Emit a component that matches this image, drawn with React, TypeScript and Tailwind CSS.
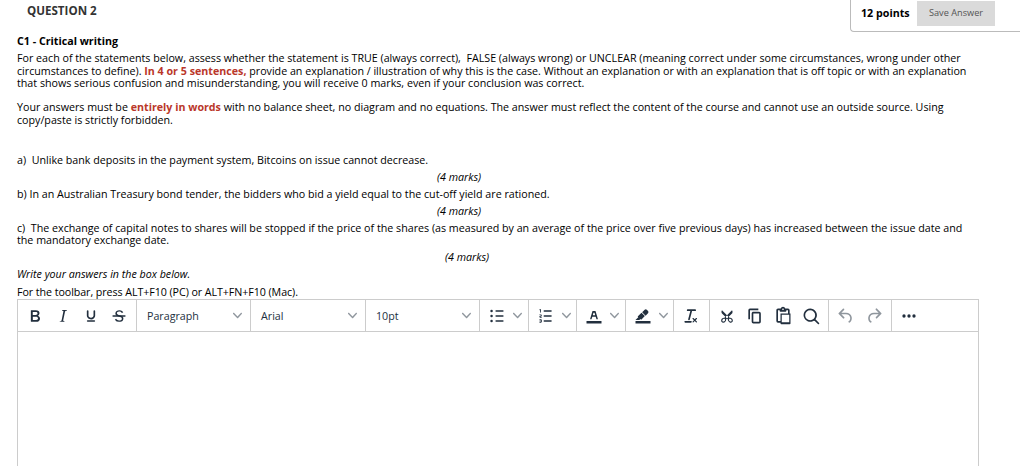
import type { ReactNode } from 'react'

function Icon({ children, muted = false }: { children: ReactNode; muted?: boolean }) {
  return (
    <span className="flex w-7 shrink-0 items-center justify-center">
      <svg
        viewBox="0 0 24 24"
        className={muted ? 'h-5 w-5 fill-[#222f3e] opacity-50' : 'h-5 w-5 fill-[#222f3e]'}
      >
        {children}
      </svg>
    </span>
  )
}

function Chevron() {
  return (
    <svg viewBox="0 0 10 10" className="h-[9px] w-[9px] shrink-0 fill-[#222f3e] opacity-50">
      <path d="M8.7 2.2c.3-.3.8-.3 1 0 .4.4.4.9 0 1.2L5.7 7.8c-.3.3-.9.3-1.2 0L.2 3.4a.8.8 0 010-1.2c.3-.3.8-.3 1.1 0L5 6l3.7-3.8z" />
    </svg>
  )
}

function Select({ label, className }: { label: string; className: string }) {
  return (
    <div
      className={`flex shrink-0 items-center justify-between border-r border-[#ccc] pl-[10px] pr-2 text-[#222f3e] ${className}`}
    >
      <span className="pt-[2px]">{label}</span>
      <Chevron />
    </div>
  )
}

function SplitButton({ children, className }: { children: ReactNode; className: string }) {
  return (
    <div className={`flex shrink-0 items-center border-r border-[#ccc] pl-[3px] ${className}`}>
      {children}
      <span className="ml-[2px] flex">
        <Chevron />
      </span>
    </div>
  )
}

function Toolbar() {
  return (
    <div className="flex h-8 border-b border-[#ccc]">
      <div className="flex w-[119px] shrink-0 items-center border-r border-[#ccc] pl-[3px]">
        <Icon>
          <path fillRule="evenodd" d="M7.8 19c-.3 0-.5 0-.6-.2l-.2-.5V5.7c0-.2 0-.4.2-.5l.6-.2h5c1.5 0 2.7.3 3.5 1 .7.6 1.1 1.4 1.1 2.5a3 3 0 01-.6 1.9c-.4.6-1 1-1.6 1.2.4.1.9.3 1.3.6s.8.7 1 1.2c.4.4.5 1 .5 1.6 0 1.3-.4 2.3-1.3 3-.8.7-2.1 1-3.8 1H7.8zm5-8.3c.6 0 1.2-.1 1.6-.5.4-.3.6-.7.6-1.3 0-1.1-.8-1.7-2.3-1.7H9.3v3.5h3.4zm.5 6c.7 0 1.3-.1 1.7-.4.4-.4.6-.9.6-1.5s-.2-1-.7-1.4c-.4-.3-1-.4-2-.4H9.4v3.8h4z" />
        </Icon>
        <Icon>
          <path d="M16.7 4.7l-.1.9h-.3c-.6 0-1 0-1.4.3-.3.3-.4.6-.5 1.1l-2.1 9.8v.6c0 .5.4.8 1.4.8h.2l-.2.8H8l.2-.8h.2c1.1 0 1.8-.5 2-1.5l2-9.8.1-.5c0-.6-.4-.8-1.4-.8h-.3l.2-.9h5.8z" />
        </Icon>
        <Icon>
          <path d="M16 5c.6 0 1 .4 1 1v5.5a4 4 0 01-.4 1.8l-1 1.4a5.3 5.3 0 01-5.5 1 5 5 0 01-1.6-1c-.5-.4-.8-.9-1.1-1.4a4 4 0 01-.4-1.8V6c0-.6.4-1 1-1s1 .4 1 1v5.5c0 .3 0 .6.2 1l.6.7a3.3 3.3 0 002.2.8 3.4 3.4 0 002.2-.8c.3-.2.4-.5.6-.8l.2-.9V6c0-.6.4-1 1-1zM8 17h8c.6 0 1 .4 1 1s-.4 1-1 1H8a1 1 0 010-2z" />
        </Icon>
        <Icon>
          <path d="M15.6 8.5c-.5-.7-1-1.1-1.3-1.3-.6-.4-1.3-.6-2-.6-2.7 0-2.8 1.7-2.8 2.1 0 1.6 1.8 2 3.2 2.3 4.4.9 4.6 2.8 4.6 3.9 0 1.4-.7 4.1-5 4.1A6.2 6.2 0 017 16.4l1.5-1.1c.4.6 1.6 2 3.7 2 1.6 0 2.5-.4 3-1.2.4-.8.3-2-.8-2.6-.7-.4-1.6-.7-2.9-1-1-.2-3.9-.8-3.9-3.6C7.6 6 10.3 5 12.4 5c2.9 0 4.2 1.6 4.7 2.4l-1.5 1.1z" />
          <path d="M5 11h14a1 1 0 010 2H5a1 1 0 010-2z" />
        </Icon>
      </div>

      <Select label="Paragraph" className="w-[114px]" />
      <Select label="Arial" className="w-[115px]" />
      <Select label="10pt" className="w-[114px]" />

      <SplitButton className="w-[49px]">
        <Icon>
          <path d="M11 5h8a1 1 0 010 2h-8a1 1 0 010-2zm0 6h8a1 1 0 010 2h-8a1 1 0 010-2zm0 6h8a1 1 0 010 2h-8a1 1 0 010-2z" />
          <circle cx="5.5" cy="6" r="1.5" />
          <circle cx="5.5" cy="12" r="1.5" />
          <circle cx="5.5" cy="18" r="1.5" />
        </Icon>
      </SplitButton>
      <SplitButton className="w-[48px]">
        <Icon>
          <path d="M10 17h8a1 1 0 010 2h-8a1 1 0 010-2zm0-6h8a1 1 0 010 2h-8a1 1 0 010-2zm0-6h8a1 1 0 010 2h-8a1 1 0 110-2zM6 4v3.5c0 .3-.2.5-.5.5a.5.5 0 01-.5-.5V5h-.5a.5.5 0 010-1H6zm-1 8.8l.2.2h1.3c.3 0 .5.2.5.5s-.2.5-.5.5H4.9a1 1 0 01-.9-1V13c0-.4.3-.8.6-1l1.2-.4.2-.3a.2.2 0 00-.2-.2H4.5a.5.5 0 01-.5-.5c0-.3.2-.5.5-.5h1.6c.5 0 .9.4.9 1v.1c0 .4-.3.8-.6 1l-1.2.4-.2.3zM7 17v2c0 .6-.4 1-1 1H4.5a.5.5 0 010-1h1.2c.2 0 .3-.1.3-.3 0-.2-.1-.3-.3-.3H4.4a.4.4 0 110-.8h1.3c.2 0 .3-.1.3-.3 0-.2-.1-.3-.3-.3H4.5a.5.5 0 110-1H6c.6 0 1 .4 1 1z" />
        </Icon>
      </SplitButton>
      <SplitButton className="w-[49px]">
        <Icon>
          <path d="M3 18h18v3H3z" />
          <path fillRule="evenodd" d="M8.7 16h-.8a.5.5 0 01-.5-.6l2.7-9c.1-.3.3-.4.5-.4h2.8c.2 0 .4.1.5.4l2.7 9a.5.5 0 01-.5.6h-.8a.5.5 0 01-.4-.4l-.7-2.2c0-.3-.3-.4-.5-.4h-3.4c-.2 0-.4.1-.5.4l-.7 2.2c0 .3-.2.4-.4.4zm2.6-7.6l-.6 2a.5.5 0 00.5.6h1.6a.5.5 0 00.5-.6l-.6-2c0-.3-.3-.4-.5-.4h-.4c-.2 0-.4.1-.5.4z" />
        </Icon>
      </SplitButton>
      <SplitButton className="w-[48px]">
        <Icon>
          <path d="M3 18h18v3H3z" />
          <path d="M7.7 16.7H3l3.3-3.3-.7-.8L10.2 8l4 4.1-4 4.2c-.2.2-.6.2-.8 0l-.6-.7-1.1 1.1zm5-7.5L11 7.4l3-2.9a2 2 0 012.6 0L18 6c.7.7.7 2 0 2.7l-2.9 2.9-1.8-1.8-.5-.6z" />
        </Icon>
      </SplitButton>

      <div className="flex w-9 shrink-0 items-center border-r border-[#ccc] pl-[3px]">
        <Icon>
          <path d="M13.2 6a1 1 0 010 .2l-2.6 10a1 1 0 01-1 .8h-.2a.8.8 0 01-.8-1l2.6-10H8a1 1 0 110-2h9a1 1 0 010 2h-3.8zM5 18h7a1 1 0 010 2H5a1 1 0 010-2zm13 1.5L16.5 18 15 19.5a.7.7 0 01-1-1l1.5-1.5-1.5-1.5a.7.7 0 011-1l1.5 1.5 1.5-1.5a.7.7 0 011 1L17.5 17l1.5 1.5a.7.7 0 01-1 1z" />
        </Icon>
      </div>

      <div className="flex w-[119px] shrink-0 items-center border-r border-[#ccc] pl-[3px]">
        <Icon>
          <path fillRule="evenodd" d="M18 15c.6.7 1 1.4 1 2.3 0 .8-.2 1.5-.7 2l-.8.5-1 .2c-.4 0-.8 0-1.2-.3a3.9 3.9 0 01-2.1-2.2c-.2-.5-.3-1-.2-1.5l-1-1-1 1c0 .5 0 1-.2 1.5-.1.5-.4 1-.9 1.4-.3.4-.7.6-1.2.8l-1.2.3c-.4 0-.7 0-1-.2-.3 0-.6-.3-.8-.5-.5-.5-.8-1.2-.7-2 0-.9.4-1.6 1-2.2A3.7 3.7 0 018.6 14H9l1-1-4-4-.5-1a3.3 3.3 0 010-2c0-.4.3-.7.5-1l6 6 6-6 .5 1a3.3 3.3 0 010 2c0 .4-.3.7-.5 1l-4 4 1 1h.5c.4 0 .8 0 1.2.3.5.2.9.4 1.2.8zm-8.5 2.2l.1-.4v-.7a1 1 0 00-.2-.5 1 1 0 00-.4-.2 1.6 1.6 0 00-.8 0 2.6 2.6 0 00-.8.3 2.5 2.5 0 00-.9 1.1l-.1.4v.7l.2.5.5.2h.7a2.5 2.5 0 00.8-.3 2.8 2.8 0 001-1zm2.5-2.8c.4 0 .7-.1 1-.4.3-.3.4-.6.4-1s-.1-.7-.4-1c-.3-.3-.6-.4-1-.4s-.7.1-1 .4c-.3.3-.4.6-.4 1s.1.7.4 1c.3.3.6.4 1 .4zm5.4 4l.2-.5v-.7a2.6 2.6 0 00-.3-.8 2.4 2.4 0 00-.7-.7 2.5 2.5 0 00-.8-.3 1.5 1.5 0 00-.8 0 1 1 0 00-.4.2 1 1 0 00-.2.5 1.5 1.5 0 000 .7v.4l.3.4.3.4a2.8 2.8 0 00.8.5l.4.1h.7l.5-.2z" />
        </Icon>
        <Icon>
          <path fillRule="evenodd" d="M16 3H6a2 2 0 00-2 2v11h2V5h10V3zm1 4a2 2 0 012 2v10a2 2 0 01-2 2h-7a2 2 0 01-2-2V9c0-1.2.9-2 2-2h7zm0 12V9h-7v10h7z" />
        </Icon>
        <Icon>
          <path fillRule="evenodd" d="M18 9V5h-2v1c0 .6-.4 1-1 1H9a1 1 0 01-1-1V5H6v13h3V9h9zM9 20H6a2 2 0 01-2-2V5c0-1.1.9-2 2-2h3.2A3 3 0 0112 1a3 3 0 012.8 2H18a2 2 0 012 2v4h1v12c0 .6-.4 1-1 1H10a1 1 0 01-1-1v-1zm1.5-9.5v9h9v-9h-9zM12 3a1 1 0 00-1 1c0 .5.4 1 1 1s1-.5 1-1-.4-1-1-1z" />
        </Icon>
        <Icon>
          <path fillRule="evenodd" d="M16 17.3a8 8 0 111.4-1.4l4.3 4.4a1 1 0 01-1.4 1.4l-4.4-4.3zm-5-.3a6 6 0 100-12 6 6 0 000 12z" />
        </Icon>
      </div>

      <div className="flex w-[63px] shrink-0 items-center border-r border-[#ccc] pl-[3px]">
        <Icon muted>
          <path d="M6.4 8H12c3.7 0 6.2 2 6.8 5.1.6 2.7-.4 5.6-2.3 6.8a1 1 0 01-1-1.8c1.1-.6 1.8-2.7 1.4-4.6-.5-2.1-2.1-3.5-4.9-3.5H6.4l3.3 3.3a1 1 0 11-1.4 1.4l-5-5a1 1 0 010-1.4l5-5a1 1 0 011.4 1.4L6.4 8z" />
        </Icon>
        <Icon muted>
          <path d="M17.6 10H12c-2.8 0-4.4 1.4-4.9 3.5-.4 2 .3 4 1.4 4.6a1 1 0 11-1 1.8c-2-1.2-2.9-4.1-2.3-6.8.6-3 3-5.1 6.8-5.1h5.6l-3.3-3.3a1 1 0 111.4-1.4l5 5a1 1 0 010 1.4l-5 5a1 1 0 01-1.4-1.4l3.3-3.3z" />
        </Icon>
      </div>

      <div className="flex items-center pl-[3px]">
        <Icon>
          <circle cx="6" cy="12" r="2" />
          <circle cx="12" cy="12" r="2" />
          <circle cx="18" cy="12" r="2" />
        </Icon>
      </div>
    </div>
  )
}

export default function App() {
  return (
    <main className="h-[466px] w-[1024px] overflow-hidden whitespace-pre bg-white font-['Open_Sans',sans-serif] text-[10.7px] leading-[12.7px] text-black">
      <header className="flex h-[34px] w-[1020px] items-start justify-between">
        <h1 className="pl-[27px] pt-1 text-[11.6px] font-bold leading-[14px] text-[#333]">QUESTION 2</h1>
        <div className="flex h-[32px] w-[170px] items-start rounded-bl border-b border-l border-[#bbb] pl-[10px]">
          <span className="w-14 pt-[7px] font-bold">12 points</span>
          <button className="mt-px h-[25px] w-[78px] bg-[#dadada] text-[9.2px] text-[#555]">
            Save Answer
          </button>
        </div>
      </header>

      <section className="h-[265px] pl-[17px]">
        <h2 className="pt-px font-bold leading-[13px]">C1 - Critical writing</h2>
        <div className="mt-[3.9px]">
          <p>For each of the statements below, assess whether the statement is TRUE (always correct),  FALSE (always wrong) or UNCLEAR (meaning correct under some circumstances, wrong under other</p>
          <p>
            circumstances to define). <b className="text-[#ba372a]">In 4 or 5 sentences,</b> provide an explanation / illustration of why this is the case. Without an explanation or with an explanation that is off topic or with an explanation
          </p>
          <p>that shows serious confusion and misunderstanding, you will receive 0 marks, even if your conclusion was correct.</p>
        </div>
        <div className="mt-[11px]">
          <p>
            Your answers must be <b className="text-[#ba372a]">entirely in words</b> with no balance sheet, no diagram and no equations. The answer must reflect the content of the course and cannot use an outside source. Using
          </p>
          <p>copy/paste is strictly forbidden.</p>
        </div>

        <p className="mt-[27.6px]">a)  Unlike bank deposits in the payment system, Bitcoins on issue cannot decrease.</p>
        <p className="mt-[4.2px] pl-[420px] italic">(4 marks)</p>
        <p className="mt-[4.2px]">b) In an Australian Treasury bond tender, the bidders who bid a yield equal to the cut-off yield are rationed.</p>
        <p className="mt-[4.2px] pl-[420px] italic">(4 marks)</p>
        <p className="mt-[4.2px]">c)  The exchange of capital notes to shares will be stopped if the price of the shares (as measured by an average of the price over five previous days) has increased between the issue date and</p>
        <p>the mandatory exchange date.</p>
        <p className="mt-[4.2px] pl-[428px] italic">(4 marks)</p>
        <p className="mt-[4.2px] italic">Write your answers in the box below.</p>
        <p className="mt-[5px] tracking-[-0.07px]">For the toolbar, press ALT+F10 (PC) or ALT+FN+F10 (Mac).</p>
      </section>

      <section className="ml-[17px] h-[180px] w-[962px] border border-[#ccc]">
        <Toolbar />
      </section>
    </main>
  )
}
